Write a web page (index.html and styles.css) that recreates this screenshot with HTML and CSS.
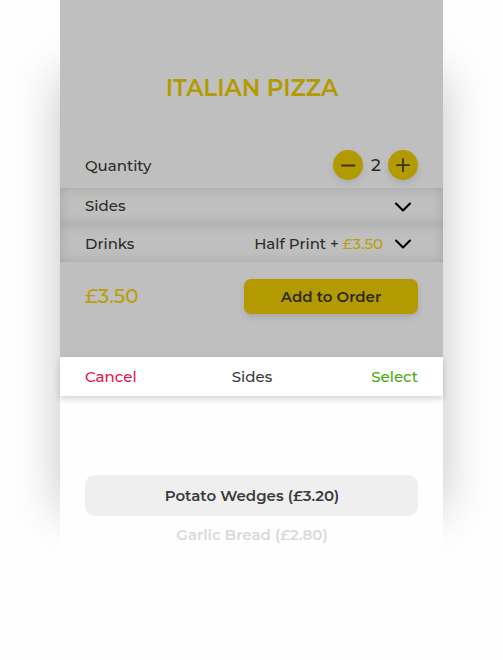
FILE: index.html
```html
<!DOCTYPE html>
<html lang="en">
<head>
    <meta charset="UTF-8">
    <meta name="viewport" content="width=device-width, initial-scale=1.0">
    <title>Italian Pizza</title>
    <link rel="stylesheet" href="styles.css">
</head>
<body>

    <div class="phone">
        <!-- Order section -->
        <div class="order">
            <h1>ITALIAN PIZZA</h1>

            <div class="quantity">
                <span class="label">Quantity</span>
                <div class="stepper">
                    <button class="round" aria-label="Less">
                        <svg width="30" height="30" viewBox="0 0 30 30"><path d="M9 15.5H21.5"/></svg>
                    </button>
                    <span class="count">2</span>
                    <button class="round" aria-label="More">
                        <svg width="30" height="30" viewBox="0 0 30 30"><path d="M9 15.2H21M15 9V21.2"/></svg>
                    </button>
                </div>
            </div>

            <div class="option sides">
                <span class="label">Sides</span>
                <svg class="arrow" width="16" height="10" viewBox="0 0 16 10"><path d="M1 1.5L8 8.5L15 1.5"/></svg>
            </div>
            <div class="option drinks">
                <span class="label">Drinks</span>
                <span class="choice">Half Print + <span class="price">£3.50</span></span>
                <svg class="arrow" width="16" height="10" viewBox="0 0 16 10"><path d="M1 1.5L8 8.5L15 1.5"/></svg>
            </div>

            <div class="total">
                <span class="amount">£3.50</span>
                <button class="add">Add to Order</button>
            </div>
        </div>

        <!-- Sides picker -->
        <div class="picker-bar">
            <span class="cancel">Cancel</span>
            <span class="picker-title">Sides</span>
            <span class="select">Select</span>
        </div>
        <div class="picker">
            <div class="item active">Potato Wedges (£3.20)</div>
            <div class="item next">Garlic Bread (£2.80)</div>
        </div>
    </div>

</body>
</html>
```

FILE: styles.css
```css
* {
    box-sizing: border-box;
}
body {
    margin: 0;
    background-color: #fefefe;
    font-family: Montserrat, Inter, sans-serif;
    font-size: 15px;
    font-weight: 500;
    color: #3a3a3a;
    overflow: hidden;
}
.phone {
    position: relative;
    width: 383px;
    height: 660px;
    margin-left: 60px;
}
/* Soft shadow on both sides of the phone */
.phone::before {
    content: "";
    position: absolute;
    z-index: -1;
    top: 75px;
    left: 0;
    right: 0;
    height: 435px;
    box-shadow: 0 0 45px rgba(0, 0, 0, 0.23);
}
.order {
    height: 357px;
    background-color: #bfbfbf;
    color: #2b2b2b;
}
h1 {
    margin: 0;
    padding: 74px 0 0 1px;
    height: 150px;
    font-size: 23px;
    line-height: 29px;
    font-weight: 600;
    text-align: center;
    color: #b39a00;
}
.quantity {
    display: flex;
    justify-content: space-between;
    height: 38px;
    padding: 0 25px;
    line-height: 31px;
}
.stepper {
    display: flex;
}
.count {
    width: 25px;
    padding-left: 1px;
    text-align: center;
    font-size: 17px;
}
button {
    border: none;
    padding: 0;
    font: inherit;
    color: #2b2b1a;
    background-color: #b39a00;
}
.round {
    width: 30px;
    height: 30px;
    border-radius: 50%;
    box-shadow: 0 3px 6px rgba(0, 0, 0, 0.1);
}
svg {
    display: block;
    fill: none;
    stroke: #38320f;
    stroke-width: 1.8;
    stroke-linecap: round;
    stroke-linejoin: round;
}
.option {
    display: flex;
    align-items: center;
    height: 36px;
    padding: 0 32px 0 25px;
    line-height: 20px;
    box-shadow: inset 0 0 12px rgba(0, 0, 0, 0.14);
}
.sides .label {
    padding-bottom: 1px;
}
.drinks {
    height: 38px;
    padding-top: 2px;
}
.arrow {
    margin: 2px 0 0 auto;
    stroke: #000;
    stroke-width: 2.1;
}
.choice {
    margin-left: auto;
}
.choice + .arrow {
    margin: 0 0 0 12px;
}
.price, .amount {
    color: #b79f10;
}
.total {
    display: flex;
    justify-content: space-between;
    padding: 17px 25px 0;
    line-height: 35px;
}
.amount {
    font-size: 20px;
}
.add {
    width: 174px;
    height: 35px;
    border-radius: 7px;
    font-weight: 600;
    box-shadow: 0 3px 6px rgba(0, 0, 0, 0.12);
}
.picker-bar {
    position: relative;
    display: grid;
    grid-template-columns: 1fr auto 1fr;
    height: 39px;
    padding: 0 25px;
    line-height: 40px;
    background-color: #fff;
    box-shadow: 0 3px 6px rgba(0, 0, 0, 0.16);
}
.cancel {
    color: #e8104f;
}
.picker-title {
    padding-left: 1px;
}
.select {
    text-align: right;
    color: #49a80d;
}
.picker {
    height: 264px;
    padding: 79px 25px 0;
    background-color: #fefefe;
    text-align: center;
    font-weight: 600;
}
.item {
    height: 41px;
    padding-left: 1px;
    line-height: 41px;
}
.active {
    background-color: #efefef;
    border-radius: 10px;
}
.next {
    line-height: 38px;
    color: #d9d9d9;
}
```
